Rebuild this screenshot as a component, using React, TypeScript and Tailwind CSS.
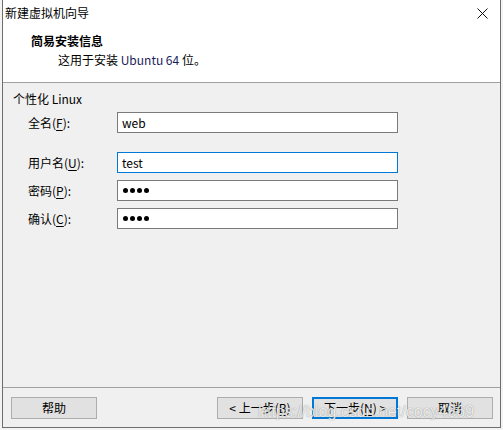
import type { ReactNode } from "react";

const font = "font-['Segoe_UI','Noto_Sans_CJK_SC',sans-serif]";

function Field({
  label,
  keyChar,
  value,
  secret,
  focused,
  className,
}: {
  label: string;
  keyChar: string;
  value: string;
  secret?: boolean;
  focused?: boolean;
  className?: string;
}) {
  return (
    <div className={`flex items-center pl-[25px] ${className ?? ""}`}>
      <span className="w-[89px] text-[12px] leading-[16px] text-black">
        {label}(<span className="underline underline-offset-2">{keyChar}</span>):
      </span>
      <div
        className={`flex h-[21px] w-[281px] items-center bg-white px-[4px] text-[12px] ${
          focused ? "border border-[#0078d7]" : "border border-[#7a7a7a]"
        }`}
      >
        {secret ? (
          <span className="ml-[1px] flex gap-[2px]">
            {[0, 1, 2, 3].map((i) => (
              <span key={i} className="h-[5px] w-[5px] rounded-full bg-black" />
            ))}
          </span>
        ) : (
          <span className="text-black">{value}</span>
        )}
      </div>
    </div>
  );
}

function Button({ children, primary }: { children: ReactNode; primary?: boolean }) {
  return (
    <button
      className={`flex h-[22px] w-[86px] items-center justify-center bg-[#e1e1e1] text-[12px] text-black ${
        primary ? "border-2 border-[#0078d7]" : "border border-[#adadad]"
      }`}
    >
      {children}
    </button>
  );
}

export default function App() {
  return (
    <div className={`relative h-[430px] w-[503px] bg-[#f3f3f3] ${font}`}>
      <div className="ml-[2px] flex h-[428px] w-[499px] flex-col border-x border-b border-[#6e6e6e]">
        {/* title bar */}
        <div className="flex h-[26px] items-center justify-between bg-white pl-[2px] pr-[12px]">
          <span className="text-[12px] leading-[16px] text-black">新建虚拟机向导</span>
          <svg width="11" height="11" viewBox="0 0 11 11">
            <path d="M0.5 0.5 L10.5 10.5 M10.5 0.5 L0.5 10.5" stroke="#111" strokeWidth="1" />
          </svg>
        </div>

        {/* header */}
        <div className="h-[57px] border-b border-[#a0a0a0] bg-white pl-[28px] pt-[7px]">
          <p className="text-[12px] font-bold leading-[16px] text-black">简易安装信息</p>
          <p className="mt-[3px] pl-[27px] text-[12px] leading-[16px] text-black">
            这用于安装 <span className="text-[#1c1c5c]">Ubuntu 64</span> 位。
          </p>
        </div>

        {/* body */}
        <div className="flex-1 bg-[#f0f0f0] pt-[8px]">
          <p className="pl-[10px] text-[12px] leading-[16px] text-black">个性化 Linux</p>
          <Field className="mt-[5px]" label="全名" keyChar="F" value="web" />
          <Field className="mt-[19px]" label="用户名" keyChar="U" value="test" focused />
          <Field className="mt-[7px]" label="密码" keyChar="P" value="" secret />
          <Field className="mt-[7px]" label="确认" keyChar="C" value="" secret />
        </div>

        {/* footer */}
        <div className="flex h-[40px] items-start border-t border-[#a0a0a0] bg-[#f0f0f0] pl-[8px] pr-[7px] pt-[9px]">
          <Button>帮助</Button>
          <div className="ml-auto flex gap-[9px]">
            <Button>
              &lt; 上一步(<span className="underline underline-offset-2">B</span>)
            </Button>
            <Button primary>
              下一步(<span className="underline underline-offset-2">N</span>) &gt;
            </Button>
            <Button>取消</Button>
          </div>
        </div>
      </div>

      {/* watermark */}
      <span className="pointer-events-none absolute left-[258px] top-[400px] font-['Liberation_Sans',sans-serif] text-[16px] text-white/85 [text-shadow:0_0_1px_rgba(0,0,0,0.5)]">
        https://blog.csdn.net/cocy4869
      </span>
    </div>
  );
}
